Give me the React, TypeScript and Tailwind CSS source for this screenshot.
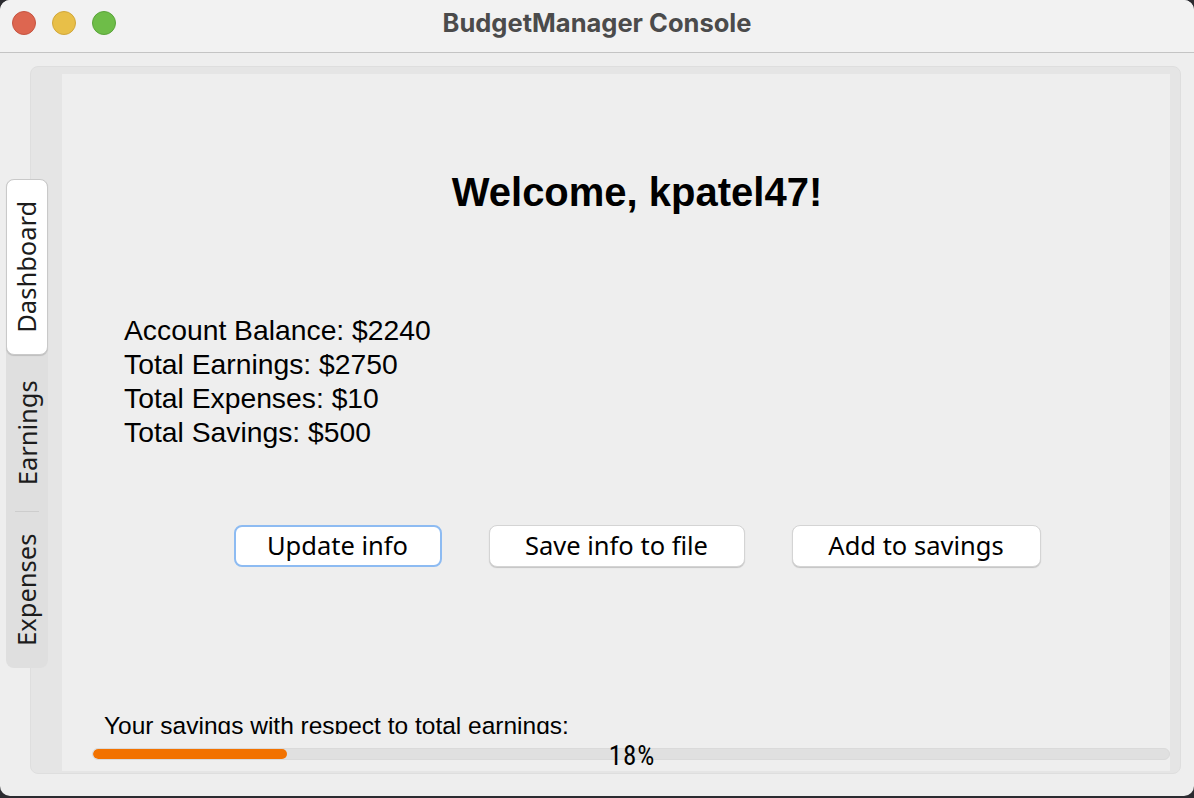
import React from "react";

function VTab({ label, selected, h }: { label: string; selected?: boolean; h: number }) {
  return (
    <div
      className={
        "flex items-center justify-center w-[42px] " +
        (selected ? "bg-white rounded-[8px] border border-[#c9c9c9] shadow-[0_1px_1px_rgba(0,0,0,0.15)]" : "")
      }
      style={{ height: h }}
    >
      <span className="-rotate-90 whitespace-nowrap text-[25.5px] text-[#1c1c1c] font-['Noto_Sans',sans-serif] leading-none">
        {label}
      </span>
    </div>
  );
}

function Btn({ label, focused, w }: { label: string; focused?: boolean; w: string }) {
  return (
    <button
      className={
        "h-[42px] rounded-[8px] bg-white text-[25.5px] text-black font-['Noto_Sans',sans-serif] leading-none " +
        w +
        (focused
          ? " border-2 border-[#8dbbf2]"
          : " border border-[#d4d4d4] shadow-[0_1px_1px_rgba(0,0,0,0.18)]")
      }
    >
      {label}
    </button>
  );
}

export default function App() {
  return (
    <div className="w-[1194px] h-[798px] bg-[#2b2b30] overflow-hidden">
      <div className="w-[1194px] h-[796px] bg-[#eeeeee] rounded-[10px] overflow-hidden flex flex-col">
        {/* title bar */}
        <div className="h-[53px] shrink-0 bg-[#f2f2f2] border-b border-[#c4c4c4] flex items-center relative">
          <div className="flex items-center gap-[16px] pl-[12px] -mt-[6px]">
            <div className="w-[24px] h-[24px] rounded-full bg-[#dd6650] border border-[#c65441]" />
            <div className="w-[24px] h-[24px] rounded-full bg-[#e8bf48] border border-[#d1a73a]" />
            <div className="w-[24px] h-[24px] rounded-full bg-[#6ebd48] border border-[#5aa43a]" />
          </div>
          <div className="absolute left-0 right-0 top-0 h-[46px] flex items-center justify-center pointer-events-none">
            <span className="text-[25.5px] font-bold text-[#4b4b4b] font-['Inter',sans-serif]">
              BudgetManager Console
            </span>
          </div>
        </div>

        {/* body */}
        <div className="flex-1 flex pl-[6px] pt-[13px] pr-[13px] pb-[22px]">
          {/* tabs */}
          <div className="relative z-10 mt-[113px] w-[42px] flex flex-col bg-[#dfdfdf] rounded-[8px] h-[489px]">
            <VTab label="Dashboard" selected h={176} />
            <div className="h-[1px] mx-[9px] bg-[#c9c9c9] -mt-[1px]" />
            <VTab label="Earnings" h={156} />
            <div className="h-[1px] mx-[9px] bg-[#cdcdcd]" />
            <VTab label="Expenses" h={156} />
          </div>

          {/* panel */}
          <div className="-ml-[18px] flex-1 bg-[#e5e5e5] border border-[#dedede] rounded-[8px] pl-[31px] pt-[7px] pr-[10px] pb-[2px] flex">
            <div className="flex-1 bg-[#eeeeee] flex flex-col font-['Liberation_Sans',Arial,sans-serif] text-black">
              <div className="pl-[42px] mt-[95px] text-center text-[40px] font-bold leading-[46px]">
                Welcome, kpatel47!
              </div>
              <div className="mt-[98px] pl-[62px] text-[28.3px] leading-[34px]">
                <div>Account Balance: $2240</div>
                <div>Total Earnings: $2750</div>
                <div>Total Expenses: $10</div>
                <div>Total Savings: $500</div>
              </div>
              <div className="mt-[76px] pl-[42px] flex justify-center items-center gap-[47px]">
                <Btn label="Update info" focused w="w-[208px]" />
                <Btn label="Save info to file" w="w-[256px]" />
                <Btn label="Add to savings" w="w-[249px]" />
              </div>
              <div className="mt-[146px] pl-[42px] h-[21px] overflow-hidden text-[24.5px] leading-[26px]">
                Your savings with respect to total earnings:
              </div>
              <div className="mt-[14px] pl-[30px] relative">
                <div className="h-[12px] rounded-full bg-[#e0e0e0] border border-[#dadada] overflow-hidden">
                  <div className="h-full w-[194px] bg-[#f27200] rounded-full" />
                </div>
                <div className="absolute left-[32px] right-0 -top-[7px] flex justify-center pointer-events-none">
                  <span className="text-[27px] leading-[30px] tracking-[1px] font-['Liberation_Sans_Narrow','Roboto_Condensed',Roboto,sans-serif]">18%</span>
                </div>
              </div>
            </div>
          </div>
        </div>
      </div>
    </div>
  );
}
